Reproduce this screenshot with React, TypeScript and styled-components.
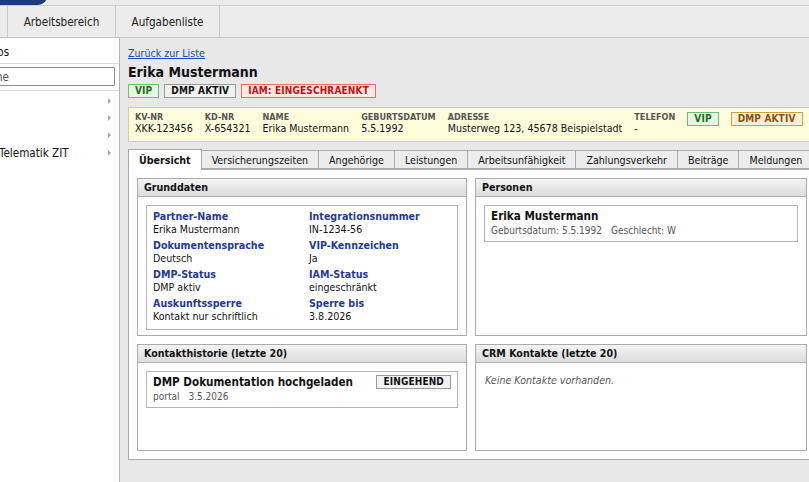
import styled, { createGlobalStyle } from "styled-components";

const GlobalStyle = createGlobalStyle`
  html, body {
    margin: 0;
    padding: 0;
    background: #e8e8e8;
    font-family: Tahoma, "DejaVu Sans Condensed", "DejaVu Sans", sans-serif;
    font-size: 10.6px;
    color: #111;
  }
  * { box-sizing: border-box; }
`;

const Page = styled.div`
  width: 809px;
  height: 482px;
  overflow: hidden;
  display: flex;
  flex-direction: column;
  background: #e8e8e8;
`;

const TopStrip = styled.div`
  height: 5px;
  background: #ececec;
  overflow: hidden;
`;

const Pill = styled.div`
  width: 47px;
  height: 18px;
  margin-top: -13px;
  background: #1e3a7c;
  border-radius: 0 9px 9px 0;
  color: #fff;
  font-size: 11px;
  line-height: 18px;
  padding-left: 14px;
`;

const NavBar = styled.div`
  height: 33px;
  display: flex;
  background: #ececec;
  border-top: 1px solid #d0d0d0;
  border-bottom: 1px solid #c4c4c4;
`;

const NavTab = styled.div<{ w: number }>`
  width: ${({ w }) => w}px;
  display: flex;
  align-items: center;
  justify-content: center;
  border-right: 1px solid #cacaca;
  font-size: 11.6px;
  color: #222;
`;

const Body = styled.div`
  flex: 1;
  display: flex;
  min-height: 0;
`;

const Sidebar = styled.div`
  width: 120px;
  flex-shrink: 0;
  background: #fff;
  border-right: 1px solid #b4b4b4;
  overflow: hidden;
`;

const SideHeader = styled.div`
  height: 26px;
  display: flex;
  align-items: center;
  padding-top: 2px;
  border-bottom: 1px solid #dcdcdc;
  font-size: 11.6px;
  span {
    margin-left: -16px;
  }
`;

const SearchWrap = styled.div`
  padding: 3px 0 4px;
  border-bottom: 1px solid #dcdcdc;
`;

const SearchInput = styled.input`
  display: block;
  margin-left: -28px;
  width: 143px;
  height: 19px;
  border: 1px solid #8c8c8c;
  border-radius: 1px;
  padding: 0 4px;
  font: inherit;
  font-size: 11.6px;
  &::placeholder {
    color: #555;
  }
`;

const MenuList = styled.div`
  padding-top: 1px;
`;

const MenuItem = styled.div`
  height: 17.3px;
  display: flex;
  align-items: center;
  justify-content: space-between;
  padding-right: 8px;
  font-size: 11.6px;
  span {
    margin-left: -1px;
  }
  &::after {
    content: "";
    border-left: 3px solid #aaa;
    border-top: 3px solid transparent;
    border-bottom: 3px solid transparent;
  }
`;

const Main = styled.div`
  flex: 1;
  overflow: hidden;
  padding: 9px 0 0 8px;
`;

const Inner = styled.div`
  width: 686px;
`;

const BackLink = styled.a`
  color: #2346b0;
  text-decoration: underline;
  font-size: 10.6px;
  cursor: pointer;
`;

const Title = styled.h1`
  margin: 4px 0 3px;
  font-size: 14px;
  line-height: 18px;
  font-weight: bold;
`;

const BadgeRow = styled.div`
  display: flex;
  gap: 5px;
`;

type Tone = "green" | "gray" | "red" | "amber";

const tones: Record<Tone, [string, string, string]> = {
  green: ["#e6f6e6", "#6cbf6c", "#167016"],
  gray: ["#f2f2f2", "#9a9a9a", "#111"],
  red: ["#fde8e8", "#e07070", "#c41010"],
  amber: ["#fbf0d6", "#c9a04a", "#8a5200"],
};

const Badge = styled.span<{ tone: Tone }>`
  display: inline-block;
  height: 14px;
  line-height: 12px;
  padding: 0 6px;
  font-size: 10px;
  font-weight: bold;
  letter-spacing: 0.15px;
  white-space: nowrap;
  background: ${({ tone }) => tones[tone][0]};
  border: 1px solid ${({ tone }) => tones[tone][1]};
  color: ${({ tone }) => tones[tone][2]};
`;

const InfoBar = styled.div`
  margin-top: 9px;
  height: 35px;
  width: 700px;
  display: flex;
  align-items: flex-start;
  gap: 12px;
  padding: 4px 6px;
  background: #fdfddc;
  border: 1px solid #d8cf8a;
`;

const InfoCol = styled.div`
  display: flex;
  flex-direction: column;
  white-space: nowrap;
`;

const InfoLabel = styled.span`
  font-size: 9px;
  font-weight: bold;
  color: #555;
`;

const InfoValue = styled.span`
  font-size: 10.6px;
`;

const TabRow = styled.div`
  margin-top: 7px;
  display: flex;
  align-items: flex-end;
  height: 20px;
`;

const Tab = styled.div<{ active?: boolean }>`
  height: ${({ active }) => (active ? 21 : 19)}px;
  padding: 0 10px;
  display: flex;
  align-items: center;
  white-space: nowrap;
  font-size: 10.6px;
  font-weight: ${({ active }) => (active ? "bold" : "normal")};
  background: ${({ active }) => (active ? "#fff" : "#ececec")};
  border: 1px solid #aaa;
  border-bottom: ${({ active }) => (active ? "none" : "1px solid #aaa")};
  margin-right: -1px;
  position: relative;
  z-index: ${({ active }) => (active ? 1 : 0)};
  margin-bottom: ${({ active }) => (active ? -1 : 0)}px;
`;

const Content = styled.div`
  background: #fff;
  border: 1px solid #aaa;
  height: 291px;
  padding: 8px;
  display: grid;
  grid-template-columns: 330px 332px;
  grid-template-rows: 158px 107px;
  gap: 8px;
`;

const Section = styled.div`
  border: 1px solid #aaa;
  display: flex;
  flex-direction: column;
`;

const SectionHead = styled.div`
  height: 18px;
  line-height: 17px;
  padding: 0 6px;
  font-weight: bold;
  font-size: 10.6px;
  background: linear-gradient(#f4f4f4, #dcdcdc);
  border-bottom: 1px solid #b0b0b0;
`;

const SectionBody = styled.div`
  padding: 8px 8px;
`;

const Card = styled.div`
  border: 1px solid #b4b4b4;
  padding: 3px 6px 4px;
`;

const FieldGrid = styled.div`
  display: grid;
  grid-template-columns: 156px 1fr;
  row-gap: 4px;
  padding: 1px 0 3px;
`;

const Field = styled.div`
  display: flex;
  flex-direction: column;
`;

const FieldLabel = styled.span`
  color: #233a9a;
  font-weight: bold;
  line-height: 13px;
`;

const FieldValue = styled.span`
  line-height: 12px;
`;

const CardTitle = styled.div`
  font-size: 11.6px;
  font-weight: bold;
  line-height: 15px;
`;

const CardMeta = styled.div`
  display: flex;
  gap: 9px;
  color: #555;
  font-size: 10px;
  line-height: 13px;
`;

const CardRow = styled.div`
  display: flex;
  justify-content: space-between;
  align-items: flex-start;
`;

const Empty = styled.div`
  color: #555;
  font-style: italic;
  padding: 3px 1px;
`;

const fields = [
  ["Partner-Name", "Erika Mustermann"],
  ["Integrationsnummer", "IN-1234-56"],
  ["Dokumentensprache", "Deutsch"],
  ["VIP-Kennzeichen", "Ja"],
  ["DMP-Status", "DMP aktiv"],
  ["IAM-Status", "eingeschränkt"],
  ["Auskunftssperre", "Kontakt nur schriftlich"],
  ["Sperre bis", "3.8.2026"],
];

const infos = [
  ["KV-NR", "XKK-123456"],
  ["KD-NR", "X-654321"],
  ["NAME", "Erika Mustermann"],
  ["GEBURTSDATUM", "5.5.1992"],
  ["ADRESSE", "Musterweg 123, 45678 Beispielstadt"],
  ["TELEFON", "-"],
];

const tabs = [
  "Übersicht",
  "Versicherungszeiten",
  "Angehörige",
  "Leistungen",
  "Arbeitsunfähigkeit",
  "Zahlungsverkehr",
  "Beiträge",
  "Meldungen",
];

export default function App() {
  return (
    <Page>
      <GlobalStyle />
      <TopStrip>
        <Pill>Hilfe</Pill>
      </TopStrip>
      <NavBar>
        <NavTab w={8} />
        <NavTab w={108}>Arbeitsbereich</NavTab>
        <NavTab w={104}>Aufgabenliste</NavTab>
      </NavBar>
      <Body>
        <Sidebar>
          <SideHeader>
            <span>Infos</span>
          </SideHeader>
          <SearchWrap>
            <SearchInput placeholder="Suche" />
          </SearchWrap>
          <MenuList>
            <MenuItem>
              <span />
            </MenuItem>
            <MenuItem>
              <span />
            </MenuItem>
            <MenuItem>
              <span />
            </MenuItem>
            <MenuItem>
              <span>Telematik ZIT</span>
            </MenuItem>
          </MenuList>
        </Sidebar>
        <Main>
          <Inner>
            <BackLink>Zurück zur Liste</BackLink>
            <Title>Erika Mustermann</Title>
            <BadgeRow>
              <Badge tone="green">VIP</Badge>
              <Badge tone="gray">DMP AKTIV</Badge>
              <Badge tone="red">IAM: EINGESCHRAENKT</Badge>
            </BadgeRow>
            <InfoBar>
              {infos.map(([label, value]) => (
                <InfoCol key={label}>
                  <InfoLabel>{label}</InfoLabel>
                  <InfoValue>{value}</InfoValue>
                </InfoCol>
              ))}
              <Badge tone="green">VIP</Badge>
              <Badge tone="amber">DMP AKTIV</Badge>
            </InfoBar>
            <TabRow>
              {tabs.map((t, i) => (
                <Tab key={t} active={i === 0}>
                  {t}
                </Tab>
              ))}
            </TabRow>
            <Content>
              <Section>
                <SectionHead>Grunddaten</SectionHead>
                <SectionBody>
                  <Card>
                    <FieldGrid>
                      {fields.map(([label, value]) => (
                        <Field key={label}>
                          <FieldLabel>{label}</FieldLabel>
                          <FieldValue>{value}</FieldValue>
                        </Field>
                      ))}
                    </FieldGrid>
                  </Card>
                </SectionBody>
              </Section>
              <Section>
                <SectionHead>Personen</SectionHead>
                <SectionBody>
                  <Card>
                    <CardTitle>Erika Mustermann</CardTitle>
                    <CardMeta>
                      <span>Geburtsdatum: 5.5.1992</span>
                      <span>Geschlecht: W</span>
                    </CardMeta>
                  </Card>
                </SectionBody>
              </Section>
              <Section>
                <SectionHead>Kontakthistorie (letzte 20)</SectionHead>
                <SectionBody>
                  <Card>
                    <CardRow>
                      <CardTitle>DMP Dokumentation hochgeladen</CardTitle>
                      <Badge tone="gray">EINGEHEND</Badge>
                    </CardRow>
                    <CardMeta>
                      <span>portal</span>
                      <span>3.5.2026</span>
                    </CardMeta>
                  </Card>
                </SectionBody>
              </Section>
              <Section>
                <SectionHead>CRM Kontakte (letzte 20)</SectionHead>
                <SectionBody>
                  <Empty>Keine Kontakte vorhanden.</Empty>
                </SectionBody>
              </Section>
            </Content>
          </Inner>
        </Main>
      </Body>
    </Page>
  );
}
